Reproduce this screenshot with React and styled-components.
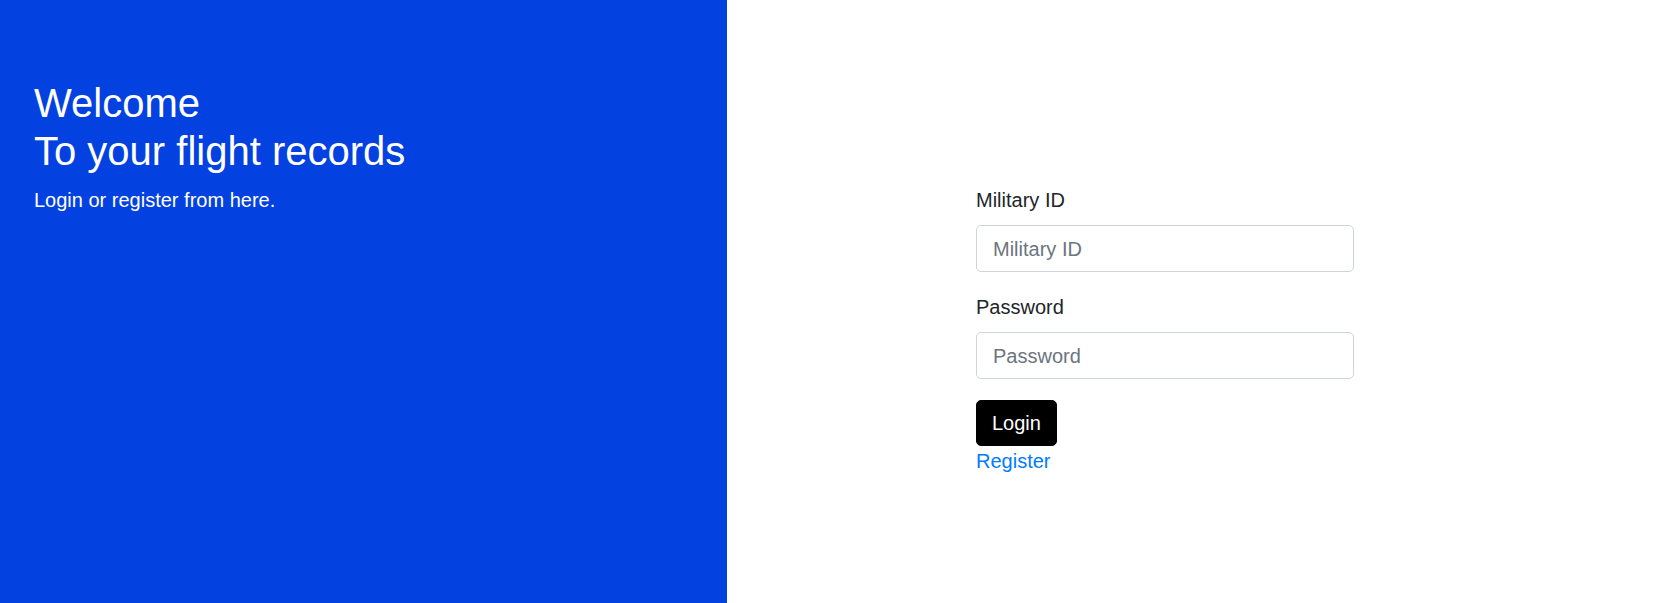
import React from 'react';
import styled, { createGlobalStyle } from 'styled-components';

const GlobalStyle = createGlobalStyle`
  * {
    box-sizing: border-box;
  }
  body {
    margin: 0;
    font-family: "Liberation Sans", Arial, sans-serif;
    color: #212529;
    background: #fff;
  }
`;

const Page = styled.div`
  display: flex;
  height: 603px;
`;

const Hero = styled.div`
  width: 727px;
  flex-shrink: 0;
  background-color: #0341e0;
  color: white;
  padding: 79px 34px 0 34px;
`;

const Title = styled.h1`
  margin: 0 0 10px 0;
  font-size: 40px;
  font-weight: 400;
  line-height: 48px;
`;

const Lead = styled.p`
  margin: 0;
  font-size: 20px;
  line-height: 30px;
`;

const Side = styled.div`
  flex: 1;
  padding: 185px 0 0 249px;
`;

const Form = styled.form`
  width: 378px;
  display: flex;
  flex-direction: column;
  align-items: flex-start;
`;

const Field = styled.div`
  width: 100%;
  margin-bottom: ${p => (p.$last ? '21px' : '20px')};
`;

const Label = styled.label`
  display: block;
  font-size: 20px;
  line-height: 30px;
  margin-bottom: 10px;
  color: #212529;
`;

const Input = styled.input`
  display: block;
  width: 100%;
  height: 47px;
  padding: 1px 16px 0 16px;
  font-family: inherit;
  font-size: 20px;
  color: #495057;
  border: 1px solid #ced4da;
  border-radius: 5px;
  outline: none;

  &::placeholder {
    color: #6c757d;
  }
`;

const Button = styled.button`
  height: 46px;
  padding: 0 15px;
  font-family: inherit;
  font-size: 20px;
  color: white;
  background-color: #000;
  border: 1px solid #000;
  border-radius: 5px;
  cursor: pointer;
`;

const Link = styled.a`
  font-size: 20px;
  line-height: 30px;
  color: #007bff;
  text-decoration: none;
`;

const App = () => {
  return (
    <>
      <GlobalStyle />
      <Page>
        <Hero>
          <Title>Welcome<br />To your flight records</Title>
          <Lead>Login or register from here.</Lead>
        </Hero>
        <Side>
          <Form onSubmit={e => e.preventDefault()}>
            <Field>
              <Label htmlFor="militaryId">Military ID</Label>
              <Input type="text" id="militaryId" placeholder="Military ID" />
            </Field>
            <Field $last>
              <Label htmlFor="password">Password</Label>
              <Input type="password" id="password" placeholder="Password" />
            </Field>
            <Button type="submit">Login</Button>
            <Link href="#">Register</Link>
          </Form>
        </Side>
      </Page>
    </>
  );
};

export default App;
